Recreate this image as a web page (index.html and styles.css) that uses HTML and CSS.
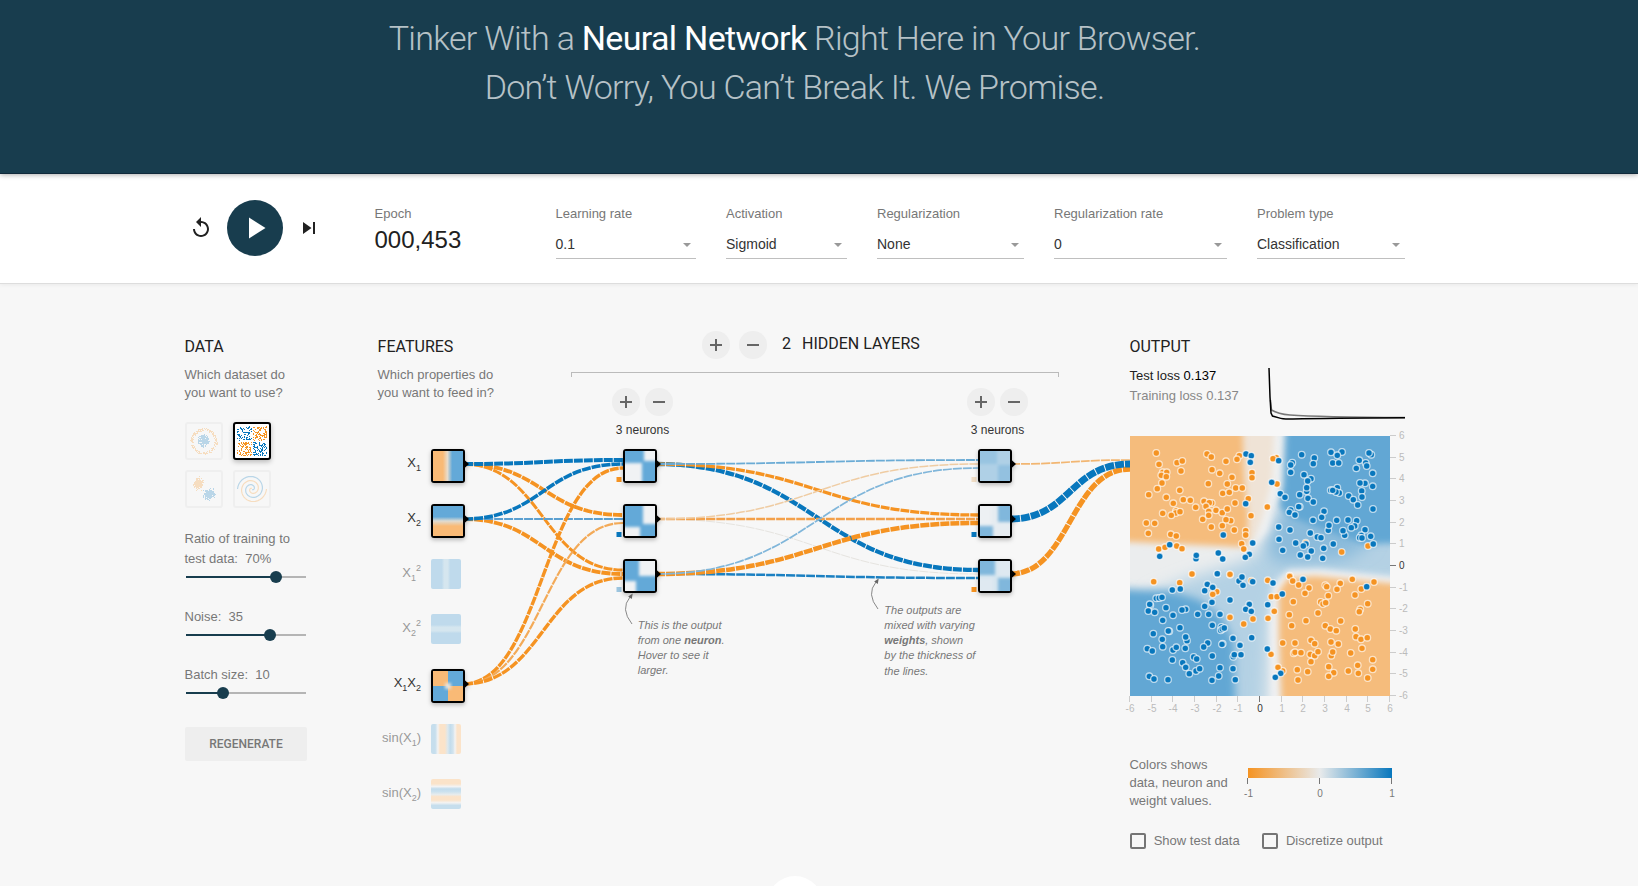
FILE: index.html
```html
<!DOCTYPE html>
<html lang="en">
<head>
<meta charset="utf-8">
<title>A Neural Network Playground</title>
<link rel="stylesheet" href="styles.css">
</head>
<body>
<header class="hero">
  <h1 class="hero-title">Tinker With a <b>Neural Network</b> Right Here in Your Browser.<br>Don’t Worry, You Can’t Break It. We Promise.</h1>
</header>

<section class="controls">
  <div class="timeline">
    <svg class="icon" viewBox="0 0 24 24"><path d="M12 5V1L7 6l5 5V7c3.31 0 6 2.69 6 6s-2.69 6-6 6-6-2.69-6-6H4c0 4.42 3.58 8 8 8s8-3.58 8-8-3.58-8-8-8z"/></svg>
    <button class="play"><svg viewBox="0 0 24 24" width="36" height="36"><path fill="#fff" d="M8 5v14l11-7z"/></svg></button>
    <svg class="icon" viewBox="0 0 24 24"><path d="M6 18l8.5-6L6 6v12zM16 6v12h2V6h-2z"/></svg>
  </div>
  <div class="epoch"><span class="label">Epoch</span><span class="epoch-value">000,453</span></div>
  <div class="selects">
    <div class="field f-rate"><span class="label">Learning rate</span><div class="select">0.1<i></i></div></div>
    <div class="field f-act"><span class="label">Activation</span><div class="select">Sigmoid<i></i></div></div>
    <div class="field f-reg"><span class="label">Regularization</span><div class="select">None<i></i></div></div>
    <div class="field f-regrate"><span class="label">Regularization rate</span><div class="select">0<i></i></div></div>
    <div class="field f-problem"><span class="label">Problem type</span><div class="select">Classification<i></i></div></div>
  </div>
</section>

<main class="main">
  <section class="data">
    <h2>Data</h2>
    <p class="sub">Which dataset do<br>you want to use?</p>
    <div class="thumbs">
      <svg class="thumb" viewBox="0 0 34 34" data-set="circle"></svg>
      <svg class="thumb selected" viewBox="0 0 34 34" data-set="xor"></svg>
      <svg class="thumb" viewBox="0 0 34 34" data-set="gauss"></svg>
      <svg class="thumb" viewBox="0 0 34 34" data-set="spiral"></svg>
    </div>
    <div class="param">Ratio of training to<br>test data: &nbsp;70%</div>
    <div class="slider"><div class="fill" style="width:90px"></div><div class="knob"></div></div>
    <div class="param next">Noise: &nbsp;35</div>
    <div class="slider"><div class="fill" style="width:84px"></div><div class="knob"></div></div>
    <div class="param next">Batch size: &nbsp;10</div>
    <div class="slider"><div class="fill" style="width:37px"></div><div class="knob"></div></div>
    <button class="regen">Regenerate</button>
  </section>

  <section class="network">
    <div class="net-head">
      <div class="features">
        <h2>Features</h2>
        <p class="sub">Which properties do<br>you want to feed in?</p>
      </div>
      <div class="hidden-layers">
        <div class="layer-count">
          <button class="round plus"></button><button class="round minus"></button>
          <h2 class="count">2</h2><h2>Hidden layers</h2>
        </div>
        <div class="bracket"></div>
        <div class="layer-controls">
          <div class="layer"><div class="pair"><button class="round plus"></button><button class="round minus"></button></div><span>3 neurons</span></div>
          <div class="layer"><div class="pair"><button class="round plus"></button><button class="round minus"></button></div><span>3 neurons</span></div>
        </div>
      </div>
    </div>
    <svg class="diagram" viewBox="377 440 753 400" width="753" height="400">
      <defs>
        <filter id="soft" x="-30%" y="-30%" width="160%" height="160%"><feGaussianBlur stdDeviation="1.7"/></filter>
        <linearGradient id="gx1"><stop offset=".33" stop-color="#f9ba76"/><stop offset=".48" stop-color="#e9dccb"/><stop offset=".64" stop-color="#63a9d8"/></linearGradient>
        <linearGradient id="gx2" x2="0" y2="1"><stop offset=".36" stop-color="#63a9d8"/><stop offset=".5" stop-color="#dfdcd3"/><stop offset=".67" stop-color="#f9ba76"/></linearGradient>
        <linearGradient id="gsq1"><stop offset=".36" stop-color="#bfdaec"/><stop offset=".44" stop-color="#d5e6ef"/><stop offset=".56" stop-color="#d5e6ef"/><stop offset=".64" stop-color="#bfdaec"/></linearGradient>
        <linearGradient id="gsq2" x2="0" y2="1"><stop offset=".36" stop-color="#bfdaec"/><stop offset=".44" stop-color="#d5e6ef"/><stop offset=".56" stop-color="#d5e6ef"/><stop offset=".64" stop-color="#bfdaec"/></linearGradient>
        <linearGradient id="gsin1"><stop offset=".14" stop-color="#c6deed"/><stop offset=".23" stop-color="#f3f3f3"/><stop offset=".3" stop-color="#fbe3c9"/><stop offset=".46" stop-color="#fbe3c9"/><stop offset=".56" stop-color="#dce8ee"/><stop offset=".64" stop-color="#c2dcec"/><stop offset=".74" stop-color="#d3e4ee"/><stop offset=".8" stop-color="#f3f3f3"/><stop offset=".87" stop-color="#fbe3c9"/></linearGradient>
        <linearGradient id="gsin2" x2="0" y2="1"><stop offset=".16" stop-color="#fbe3c9"/><stop offset=".25" stop-color="#f3f3f3"/><stop offset=".33" stop-color="#c2dcec"/><stop offset=".42" stop-color="#cbe1ee"/><stop offset=".52" stop-color="#e8ecec"/><stop offset=".59" stop-color="#fbe3c9"/><stop offset=".7" stop-color="#fbe3c9"/><stop offset=".79" stop-color="#f3f3f3"/><stop offset=".88" stop-color="#c6deed"/></linearGradient>
      </defs>
      <g id="links"></g>
      <g id="biases"></g>
      <g id="nodes"></g>
      <g class="idle">
        <rect x="431" y="559" width="30" height="30" rx="2" fill="url(#gsq1)"/>
        <rect x="431" y="614" width="30" height="30" rx="2" fill="url(#gsq2)"/>
        <rect x="431" y="724" width="30" height="30" rx="2" fill="url(#gsin1)"/>
        <rect x="431" y="779" width="30" height="30" rx="2" fill="url(#gsin2)"/>
      </g>
      <g class="names">
        <text x="421" y="467">X<tspan class="s" dy="3.5">1</tspan></text>
        <text x="421" y="522">X<tspan class="s" dy="3.5">2</tspan></text>
        <text x="421" y="577" class="off">X<tspan class="s" dy="3.5">1</tspan><tspan class="s" dy="-10">2</tspan></text>
        <text x="421" y="632" class="off">X<tspan class="s" dy="3.5">2</tspan><tspan class="s" dy="-10">2</tspan></text>
        <text x="421" y="687">X<tspan class="s" dy="3.5">1</tspan><tspan dy="-3.5">X</tspan><tspan class="s" dy="3.5">2</tspan></text>
        <text x="421" y="742" class="off">sin(X<tspan class="s" dy="3.5">1</tspan><tspan dy="-3.5">)</tspan></text>
        <text x="421" y="797" class="off">sin(X<tspan class="s" dy="3.5">2</tspan><tspan dy="-3.5">)</tspan></text>
      </g>
      <g class="callout">
        <path d="M632 624Q620 609 630 597"/><path class="tip" d="M632.7 593.5l-.9 5.4-3.6-2.3z"/>
        <text x="637.7" y="629">This is the output</text>
        <text x="637.7" y="644">from one <tspan class="strong">neuron</tspan>.</text>
        <text x="637.7" y="659">Hover to see it</text>
        <text x="637.7" y="674">larger.</text>
        <path d="M878 609Q866 594 876 582"/><path class="tip" d="M878.7 578.5l-.9 5.4-3.6-2.3z"/>
        <text x="884.3" y="614">The outputs are</text>
        <text x="884.3" y="629">mixed with varying</text>
        <text x="884.3" y="644"><tspan class="strong">weights</tspan>, shown</text>
        <text x="884.3" y="659">by the thickness of</text>
        <text x="884.3" y="675">the lines.</text>
      </g>
    </svg>
  </section>

  <section class="output">
    <h2>Output</h2>
    <div class="loss">
      <div class="loss-text"><span class="test">Test loss <b>0.137</b></span><span class="train">Training loss 0.137</span></div>
      <svg class="loss-chart" viewBox="0 0 136 56" width="136" height="56">
        <path stroke="#777" d="M1.5 34L2.5 44Q9 48 21 49Q50 51 136 51.6"/>
        <path stroke="#000" d="M0 2L1 31L2 47L3.5 50L10 51.9Q14 53.4 24 53Q60 52 136 51.7"/>
      </svg>
    </div>
    <svg class="plot" viewBox="0 -6 275 290" width="275" height="290">
      <defs>
        <clipPath id="frame"><rect width="260" height="260"/></clipPath>
        <filter id="b3" x="-30%" y="-30%" width="160%" height="160%"><feGaussianBlur stdDeviation="3"/></filter>
        <filter id="b5" x="-30%" y="-30%" width="160%" height="160%"><feGaussianBlur stdDeviation="4.2"/></filter>
        <filter id="b8" x="-50%" y="-50%" width="200%" height="200%"><feGaussianBlur stdDeviation="8"/></filter>
      </defs>
      <g clip-path="url(#frame)">
        <rect width="260" height="260" fill="#ebedee"/>
        <path filter="url(#b8)" fill="#b4d1e4" d="M300 90H160L115 125L60 142L20 158L90 300H134L140 180L152 144L300 150Z"/>
        <path filter="url(#b8)" fill="#8bbbdb" d="M150 70L135 112L148 127L215 124L240 108V60Z"/>
        <path filter="url(#b3)" fill="#eff1f2" d="M138 -20H152L150 45L137 95L122 112L126 90Z"/>
        <path filter="url(#b3)" fill="#efe3d6" d="M100 -20H145L142 45L133 80L124 104L100 110Z"/>
        <path filter="url(#b3)" fill="#f5bc7b" d="M-20 -20H112L114 40L118 80L117 111L90 110L-20 105Z"/>
        <path filter="url(#b3)" fill="#62a7d4" d="M156 -20H280V107L235 108L200 96L158 80L149 70L153 50Z"/>
        <path filter="url(#b5)" fill="#62a7d4" d="M-20 152L40 155L70 164L92 181L104 206L106 280H-20Z"/>
        <path filter="url(#b3)" fill="#f0f1f3" d="M142 280L140 190L143 150L158 134L190 133L280 143V152L150 160V280Z"/>
        <path filter="url(#b3)" fill="#f5bc7b" d="M152 280L149 200V155L158 142L185 140L280 149V280Z"/>
      </g>
      <g id="dots"></g>
      <g id="axes"></g>
    </svg>
    <div class="legend">
      <p class="sub">Colors shows<br>data, neuron and<br>weight values.</p>
      <svg class="scale" viewBox="1240 756 160 54" width="160" height="54">
        <defs><linearGradient id="ramp"><stop stop-color="#f59322"/><stop offset=".5" stop-color="#e8eaeb"/><stop offset="1" stop-color="#0877bd"/></linearGradient></defs>
        <rect x="1248" y="768" width="144" height="10" fill="url(#ramp)"/>
        <path d="M1247.5 778v6M1319.5 778v6M1391.5 778v6" stroke="#777"/>
        <text x="1248.5" y="797">-1</text><text x="1320" y="797">0</text><text x="1392" y="797">1</text>
      </svg>
    </div>
    <div class="checks">
      <label><i class="box"></i>Show test data</label>
      <label><i class="box"></i>Discretize output</label>
    </div>
  </section>
</main>
<svg class="more" viewBox="0 0 56 10"><circle cx="28" cy="28" r="28" fill="#fff"/></svg>
<script src="playground.js"></script>
</body>
</html>
```
FILE: styles.css
```css
* { box-sizing: border-box; }
body { margin: 0; height: 886px; overflow: hidden; position: relative; background: #f7f7f7; color: #777; font: 13px/18px "Liberation Sans", Arial, sans-serif; }
h1, h2, p { margin: 0; }
button { border: 0; padding: 0; font: inherit; }
svg { display: block; flex: none; }

.hero { height: 174px; padding: 14px 49px 0 0; background: #183d4e; border-bottom: 1px solid #10293a; position: relative; box-shadow: 0 1px 5px rgba(0,0,0,.32); text-align: center; }
.hero-title { font: 300 34px/49px Roboto, sans-serif; letter-spacing: -.7px; color: rgba(255,255,255,.7); }
.hero-title b { font-weight: 400; letter-spacing: -.68px; color: #fff; }

.controls { display: flex; height: 110px; padding: 26px 0 0 189px; background: #fff; border-bottom: 1px solid #ddd; box-shadow: 0 1px 4px rgba(0,0,0,.06); }
.timeline { display: flex; align-items: center; width: 185.5px; height: 56px; gap: 13.7px; }
.icon { width: 24px; height: 24px; fill: #212121; }
.icon:first-child { margin: 0 .8px 0 -.5px; }
.play { display: flex; align-items: center; justify-content: center; width: 56px; height: 56px; border-radius: 50%; background: #183d4e; }
.label { display: block; line-height: 18px; white-space: nowrap; }
.epoch { width: 181px; padding-top: 5px; }
.epoch-value { display: block; margin-top: 3px; font-size: 24px; line-height: 28px; color: #212121; }
.selects { display: flex; gap: 30px; padding-top: 5px; }
.f-rate { width: 140.5px; } .f-act { width: 121px; } .f-reg { width: 147px; } .f-regrate { width: 173px; } .f-problem { width: 148px; }
.select { display: flex; justify-content: space-between; height: 30px; margin-top: 6px; padding: 5px 5px 0 0; border-bottom: 1px solid #bfbfbf; font-size: 14px; line-height: 20px; color: #333; }
.select i { width: 0; height: 0; margin-top: 9px; border: 4px solid transparent; border-top-color: #999; border-bottom: 0; }

.main { display: flex; padding-left: 184.5px; }
h2 { font: 400 16px/20px Roboto, sans-serif; color: #212121; text-transform: uppercase; white-space: nowrap; }
.sub { white-space: nowrap; }
.data { width: 192.5px; padding-top: 53px; }
.data .sub, .features .sub { margin-top: 9px; }
.thumbs { display: grid; grid-template-columns: 38px 38px; gap: 10px; margin: 20px 0 0 .5px; }
.thumb { width: 38px; height: 38px; border: 2px solid #d8d8d8; border-radius: 3px; opacity: .25; }
.thumb.selected { border-color: #000; background: #fff; opacity: 1; box-shadow: 0 2px 5px rgba(0,0,0,.25); }
.param { margin-top: 21px; line-height: 20px; }
.param.next { margin-top: 22px; }
.slider { display: flex; align-items: center; width: 120px; height: 16px; margin-left: 1.5px; background: linear-gradient(#b5b5b5, #b5b5b5) 0 7px / 120px 2px no-repeat; }
.fill { height: 2px; background: #183d4e; }
.knob { width: 12px; height: 12px; margin-left: -6px; border-radius: 50%; background: #183d4e; }
.regen { width: 122px; height: 34px; margin: 26px 0 0 .5px; border-radius: 2px; background: #eee; color: #777; font: 500 12px/34px Roboto, sans-serif; text-transform: uppercase; }

.network { width: 753px; }
.net-head { display: grid; grid-template-columns: 194px 488px; height: 156px; }
.features { padding: 53px 0 0 .6px; }
.hidden-layers { padding-top: 47px; }
.layer-count { display: flex; padding-left: 131px; }
.layer-count h2 { margin-top: 3px; }
.layer-count .minus { margin: 0 15px 0 9px; }
.layer-count .count { margin-right: 11px; }
.round { width: 28px; height: 28px; border-radius: 50%; }
.plus { background: linear-gradient(#666, #666) center / 12px 2px no-repeat, linear-gradient(#666, #666) center / 2px 12px no-repeat, #eee; }
.minus { background: linear-gradient(#666, #666) center / 12px 2px no-repeat, #eee; }
.bracket { height: 5px; margin-top: 13px; border: solid #bbb; border-width: 1px 1px 0; }
.layer-controls { display: flex; gap: 294px; margin: 11px 0 0 41px; }
.layer { width: 61px; font-size: 12px; line-height: 16px; color: #333; text-align: center; white-space: nowrap; }
.layer span { display: block; margin-top: 6px; }
.pair { display: flex; gap: 5px; }

.link { fill: none; stroke-dasharray: 9 1; stroke-dashoffset: -1; }
.node { filter: drop-shadow(0 2px 2px rgba(0,0,0,.25)); }
.names text { font-size: 13px; text-anchor: end; fill: #333; }
.names text.off { fill: #999; }
.names .s { font-size: 9px; }
.callout text { font-size: 11px; font-style: italic; fill: #777; }
.callout path { fill: none; stroke: #888; }
.callout .tip { fill: #666; stroke: none; }
.strong { font-weight: bold; }

.output { width: 275px; padding-top: 53px; }
.output h2, .loss-text, .legend .sub { margin-left: -.6px; }
.loss { display: flex; justify-content: space-between; height: 64px; margin-top: 9px; line-height: 20px; }
.loss-text span { display: block; }
.loss-text .test { color: #212121; }
.loss-text b { font-weight: 400; color: #000; }
.loss-text .train { color: #888; }
.loss-chart { overflow: visible; }
.loss-chart path { fill: none; stroke-width: 1.5; }
.plot { overflow: visible; }
.dot { stroke: #fff; stroke-opacity: .65; stroke-width: 1.3px; }
.axis text { font-size: 10px; fill: #bbb; }
.axis line { stroke: #ccc; }
.axis .zero { fill: #333; }
.axis line.zero { stroke: #777; }
.legend { display: flex; justify-content: space-between; width: 270px; margin-top: 36px; }
.scale text { font-size: 10px; fill: #777; text-anchor: middle; }
.checks { display: flex; gap: 22.5px; margin-top: 22px; white-space: nowrap; }
.checks label { display: flex; align-items: center; gap: 7.7px; }
.box { width: 16px; height: 16px; border: 2px solid #757575; border-radius: 2px; }

.more { position: absolute; left: 767px; top: 876px; width: 56px; height: 10px; }
```
FILE: playground.js
```js
const NS = 'http://www.w3.org/2000/svg';
const ORANGE = '#f59322', BLUE = '#0877bd';
function add(parent, tag, attrs, text) {
  const el = document.createElementNS(NS, tag);
  for (const k in attrs) el.setAttribute(k, attrs[k]);
  if (text !== undefined) el.textContent = text;
  parent.appendChild(el);
  return el;
}
const byId = id => document.getElementById(id);

// Links: x1, y1, x2, y2, width, colour
[
  [463, 464, 623, 515, 3.8, ORANGE], [463, 464, 623, 570, 3, ORANGE], [463, 464, 623, 460, 4, BLUE],
  [463, 519, 623, 574, 3.9, ORANGE], [463, 519, 623, 519, 1.8, '#5a9fd0'], [463, 519, 623, 464, 3.6, BLUE],
  [463, 684, 623, 468, 3.4, ORANGE], [463, 684, 623, 523, 2.2, '#f3aa58'], [463, 684, 623, 578, 3.4, ORANGE],
  [655, 464, 978, 570, 4.3, BLUE], [655, 464, 978, 515, 3.3, ORANGE], [655, 464, 978, 460, 1.8, '#6aabd5'],
  [655, 519, 978, 574, 1, '#e6e4e0'], [655, 519, 978, 519, 2.3, '#f3a04a'], [655, 519, 978, 464, 1.5, '#efcca3'],
  [655, 574, 978, 578, 2.5, '#1b80c2'], [655, 574, 978, 523, 4.5, ORANGE], [655, 574, 978, 468, 1.7, '#80b6da'],
  [1010, 464, 1130, 460, 1.7, '#f2b672'], [1010, 574, 1130, 469, 5.3, ORANGE], [1010, 519, 1130, 464, 6.8, BLUE]
].forEach(([x1, y1, x2, y2, w, c]) => {
  const m = (x1 + x2) / 2;
  add(byId('links'), 'path', { class: 'link', d: `M${x1} ${y1}C${m} ${y1} ${m} ${y2} ${x2} ${y2}`, stroke: c, 'stroke-width': w });
});

[[616.5, [ORANGE, BLUE, '#9cc5df']], [971.5, ['#efdcc4', BLUE, ORANGE]]].forEach(([x, cs]) =>
  cs.forEach((c, i) => add(byId('biases'), 'rect', { x, y: 477 + 55 * i, width: 5, height: 5, fill: c })));

// Nodes: left, top, base fill, soft patches [x, y, w, h, colour]
const B = '#63a9d8', P = '#f0f2f4', O = '#f9ba76', M = '#80b7dc';
[
  [431, 449, 'url(#gx1)', []], [431, 504, 'url(#gx2)', []],
  [431, 669, B, [[-9, -9, 24, 24, O, 1], [15, 15, 24, 24, O, 1], [12, 12, 6, 6, '#e4e2dd']]],
  [623, 449, B, [[19, -9, 20, 19, P], [-9, 12, 26, 27, P]]],
  [623, 504, B, [[18, -9, 21, 27, P], [-9, 21, 24, 18, P]]],
  [623, 559, B, [[14, -9, 25, 24, P], [-9, 20, 20, 19, P]]],
  [978, 449, '#afd0e6', [[-9, -9, 26, 22, '#98c4e1'], [18, 14, 21, 25, '#93c1e0']]],
  [978, 504, '#e6ecf1', [[-9, -9, 20, 27, '#edf0f3'], [18, -9, 21, 25, M], [-9, 20, 22, 19, M]]],
  [978, 559, '#d6e5ef', [[-9, -9, 24, 23, M], [18, -9, 21, 24, '#dfe9f1'], [-9, 17, 22, 22, '#dfe9f1'], [18, 17, 21, 22, M]]]
].forEach(([x, y, base, patches]) => {
  const g = add(byId('nodes'), 'g', { class: 'node' });
  add(g, 'path', { d: `M${x + 33} ${y + 10.5}l5 4.5l-5 4.5z` });
  add(g, 'rect', { x, y, width: 34, height: 34, rx: 3 });
  const s = add(g, 'svg', { x: x + 2, y: y + 2, width: 30, height: 30, overflow: 'hidden' });
  add(s, 'rect', { width: 30, height: 30, fill: base });
  patches.forEach(([px, py, w, h, c, sharp]) => {
    const r = add(s, 'rect', { x: px, y: py, width: w, height: h, fill: c });
    if (!sharp) r.setAttribute('filter', 'url(#soft)');
  });
});

// Sample points, stored in thirds of a pixel from each panel's own origin
const panels = [
  { dx: -10, dy: -6,
    o: '109,69 117,103 171,98 187,93 261,72 274,81 318,94 358,77 351,88 128,127 140,127 124,136 139,140 183,123 276,119 299,130 336,142 126,159 265,161 322,162 396,128 396,143 112,176 179,181 308,190 328,187 347,174 367,174 86,194 139,202 190,209 211,211 160,220 227,232 252,214 275,219 268,218 258,229 345,219 385,206 442,231 128,250 168,243 167,249 180,245 154,256 266,244 288,241 307,248 322,237 393,257 79,279 104,280 248,268 266,256 332,272 318,269 274,291 307,287 343,300 377,302 377,315 85,310 152,313 169,318 365,341 371,357 116,357 135,352 170,348 186,356 216,432 330,434',
    b: '378,72 394,77 391,97 377,221 310,315 398,339 388,373 376,382 149,344 119,379 228,386 229,376 295,369 308,387 292,432' },
  { dx: 130, dy: -6,
    o: '49,83 39,86 51,162 245,366 324,348 89,437 137,338',
    b: '56,92 125,74 163,84 160,101 97,98 92,105 92,127 35,157 132,134 153,146 143,153 140,184 140,173 144,205 119,194 160,216 61,191 75,202 213,67 246,66 232,76 218,99 236,99 334,74 327,69 298,91 317,99 320,108 289,115 338,130 315,160 300,159 338,169 305,183 306,201 266,198 280,209 293,225 339,237 232,173 238,189 228,186 212,181 218,181 119,230 116,230 92,240 88,247 105,255 192,244 185,262 159,271 230,271 264,270 290,272 205,301 207,286 254,316 249,302 284,288 274,293 315,299 56,291 90,300 151,309 172,321 183,323 304,316 299,323 306,324 332,319 340,342 57,328 107,339 138,342 130,348 154,363 191,355 220,342 68,361 121,375 143,381 188,385' },
  { dx: -10, dy: 134,
    o: '101,35 179,38 216,12 330,13 290,65 278,73 330,142 371,162 399,147 394,32 443,31 509,19 518,33 536,45 567,54 555,70 454,80 471,80 463,124 444,145 520,95 508,134 558,152 515,167 697,28 661,40 616,46 620,50 651,58 762,36 724,57 705,75 625,77 743,101 602,96 609,102 617,98 594,129 721,118 718,125 662,153 616,167 631,177 649,182 706,177 708,200 723,208 742,203 488,219 525,219 573,211 584,221 633,216 655,222 726,235 521,250 525,247 543,248 571,253 584,257 594,245 573,275 634,257 638,246 692,249 453,253 758,269 713,286 758,298 715,310 743,324 626,290 641,308 626,319 685,303 563,305 532,299 534,330 488,303 474,292',
    b: '292,11 357,33 366,21 369,46 398,35 459,39 549,28 740,50 487,72 262,43 278,52 254,62 276,97 254,109 157,60 181,57 109,85 118,84 126,82 91,106 89,103 85,123 104,127 138,113 159,136 197,118 186,120 128,151 233,133 266,133 300,133 330,90 388,103 377,118 394,124 443,104 180,173 148,184 145,183 100,191 277,166 304,171 302,181 307,177 313,174 127,208 201,212 197,201 395,203 339,205 308,221 306,223 263,219 251,231 360,226 82,236 97,243 128,230 159,240 169,232 196,235 442,237 221,261 230,267 277,258 340,260 343,254 363,254 157,270 188,278 197,292 208,311 228,303 239,296 300,293 339,296 88,319 102,327 144,329 276,331 296,318 346,329 482,310 466,322' }
];
panels.forEach(p => [['o', ORANGE], ['b', BLUE]].forEach(([key, fill]) =>
  p[key].split(' ').forEach(pt => {
    const [x, y] = pt.split(',').map(Number);
    add(byId('dots'), 'circle', { class: 'dot', cx: (x / 3 + p.dx).toFixed(1), cy: (y / 3 + p.dy).toFixed(1), r: 3.3, fill });
  })));

const axes = add(byId('axes'), 'g', { class: 'axis' });
for (let v = -6; v <= 6; v++) {
  const p = Math.round((v + 6) * 260 / 12), z = v === 0 ? 'zero' : '';
  const q = 260 - p;
  add(axes, 'line', { class: z, x1: p - .5, x2: p - .5, y1: 260, y2: 266 });
  add(axes, 'text', { class: z, x: p, y: 276, 'text-anchor': 'middle' }, v);
  add(axes, 'line', { class: z, x1: 260, x2: 266, y1: q - .5, y2: q - .5 });
  add(axes, 'text', { class: z, x: 269, y: q + 3 }, v);
}

// Dataset thumbnails
let seed = 7;
const rnd = () => (seed = (seed * 16807) % 2147483647) / 2147483647;
const gauss = () => rnd() + rnd() + rnd() + rnd() - 2;
document.querySelectorAll('.thumb').forEach(svg => {
  const put = (x, y, fill) => add(svg, 'rect', { x: Math.round(x), y: Math.round(y), width: 1, height: 1, fill });
  const kind = svg.dataset.set;
  for (let i = 0; i < 420; i++) {
    const a = rnd() * 6.283;
    if (kind === 'circle') {
      if (i % 2) put(16.5 + Math.cos(a) * (10.5 + rnd() * 3), 17 + Math.sin(a) * (10.5 + rnd() * 3), ORANGE);
      else put(16 + Math.cos(a) * rnd() * 6.5, 16.5 + Math.sin(a) * rnd() * 6.5, BLUE);
    } else if (kind === 'gauss') {
      if (i % 2) put(11 + gauss() * 4, 11 + gauss() * 4, ORANGE);
      else put(22 + gauss() * 4, 22 + gauss() * 4, BLUE);
    }
  }
  if (kind === 'xor') for (let i = 0; i < 380; i++) {
    const left = i % 2, top = (i >> 1) % 2;
    put((left ? 2 : 17.5) + rnd() * 14, (top ? 2 : 17.5) + rnd() * 14, left === top ? BLUE : ORANGE);
  }
  if (kind === 'spiral') [[0, BLUE], [Math.PI, ORANGE]].forEach(([phase, stroke]) => {
    let d = '';
    for (let i = 2; i <= 60; i++) {
      const r = i / 60 * 14.5, t = 1.75 * i / 60 * 2 * Math.PI + phase;
      d += (d ? 'L' : 'M') + (17 + r * Math.sin(t)).toFixed(1) + ' ' + (17 + r * Math.cos(t)).toFixed(1);
    }
    add(svg, 'path', { d, fill: 'none', stroke, 'stroke-width': 1.2 });
  });
});
```
